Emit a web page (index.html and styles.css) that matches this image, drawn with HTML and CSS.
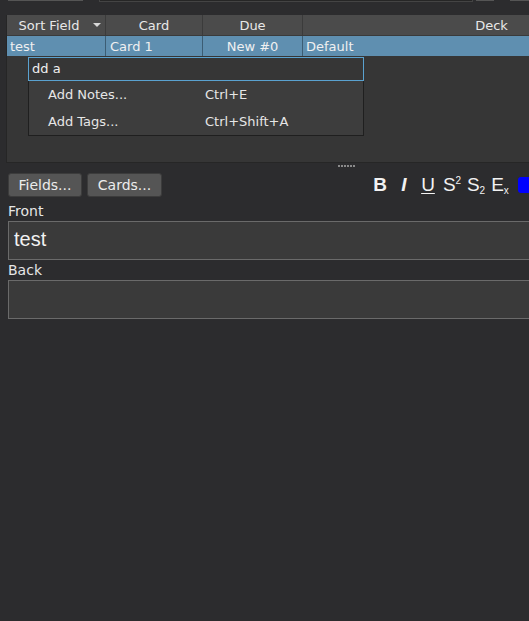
FILE: index.html
```html
<!DOCTYPE html>
<html>
<head>
<meta charset="utf-8">
<link rel="stylesheet" href="styles.css">
</head>
<body>
<div class="page">
  <div class="topstrip">
    <div class="tb a"></div>
    <div class="tb b"></div>
    <div class="tb c"></div>
    <div class="tb d"></div>
  </div>
  <div class="tablewrap">
    <div class="table">
      <div class="hdr">
        <div class="hc c1">Sort Field<span class="arrow"></span></div>
        <div class="hc c2">Card</div>
        <div class="hc c3">Due</div>
        <div class="hc c4">Deck</div>
      </div>
      <div class="row">
        <div class="rc c1 left">test</div>
        <div class="rc c2 left">Card 1</div>
        <div class="rc c3">New #0</div>
        <div class="rc c4 left">Default</div>
      </div>
    </div>
    <div class="completer">
      <div class="cinput">dd a</div>
      <div class="clist">
        <div class="citem"><span class="cname">Add Notes...</span><span class="ckey">Ctrl+E</span></div>
        <div class="citem"><span class="cname">Add Tags...</span><span class="ckey">Ctrl+Shift+A</span></div>
      </div>
    </div>
  </div>
  <div class="splitter"><span class="dots"></span></div>
  <div class="toolbar">
    <button class="btn w1">Fields...</button>
    <button class="btn w2">Cards...</button>
    <div class="fmt">
      <span class="ic bold">B</span>
      <span class="ic ital">I</span>
      <span class="ic und">U</span>
      <span class="ic sup">S<sup>2</sup></span>
      <span class="ic sub">S<sub>2</sub></span>
      <span class="ic ex">E<sub>x</sub></span>
      <span class="swatch"></span>
    </div>
  </div>
  <div class="editor">
    <div class="lbl">Front</div>
    <div class="field">test</div>
    <div class="lbl">Back</div>
    <div class="field"></div>
  </div>
</div>
</body>
</html>
```

FILE: styles.css
```css
html, body {
  margin: 0;
  padding: 0;
  background: #2c2c2e;
  overflow: hidden;
}
.page {
  width: 529px;
  height: 621px;
  overflow: hidden;
  font-family: "DejaVu Sans", sans-serif;
  font-size: 13px;
  color: #e6e6e6;
}
.topstrip {
  height: 15px;
  position: relative;
}
.tb {
  position: absolute;
  top: 0;
  height: 1px;
}
.tb.a { left: 8px; width: 75px; border-bottom: 1px solid #555555; height: 0; }
.tb.b { left: 99px; width: 372px; background: #262626; border: 1px solid #444444; border-top: none; height: 1px; }
.tb.c { left: 476px; width: 18px; border-bottom: 1px solid #555555; height: 0; }
.tb.d { left: 510px; width: 30px; border-bottom: 1px solid #555555; height: 0; }

.tablewrap {
  position: relative;
  margin-left: 6px;
  width: 700px;
  height: 147px;
  background: #363636;
  border: 1px solid #262626;
  border-top: none;
  border-right: none;
}
.table { display: flex; flex-direction: column; }
.hdr {
  display: flex;
  height: 20px;
  background: #4b4b4b;
  border-bottom: 1px solid #3a3a3a;
}
.hc {
  box-sizing: border-box;
  height: 20px;
  line-height: 21px;
  overflow: hidden;
  text-align: center;
  border-right: 1px solid #3b3b3b;
  color: #e8e8e8;
  position: relative;
}
.c1 { width: 99px; }
.c2 { width: 97px; }
.c3 { width: 100px; }
.c4 { width: 378px; }
.hc.c1 { padding-right: 14px; }
.arrow {
  position: absolute;
  right: 4px;
  top: 8px;
  width: 0; height: 0;
  border-left: 4px solid transparent;
  border-right: 4px solid transparent;
  border-top: 4px solid #d8d8d8;
}
.row {
  display: flex;
  height: 20px;
  background: #5f8fb0;
}
.rc {
  box-sizing: border-box;
  height: 20px;
  line-height: 21px;
  overflow: hidden;
  text-align: center;
  border-right: 1px solid #3c5d74;
  color: #f0f0f0;
}
.rc.left { text-align: left; padding-left: 3px; }
.rc.c2.left { padding-left: 4px; }
.rc.c4 { border-right: none; }

.completer {
  position: absolute;
  left: 21px;
  top: 42px;
  width: 336px;
}
.cinput {
  box-sizing: border-box;
  height: 24px;
  line-height: 22px;
  padding-left: 3px;
  background: #363636;
  border: 1px solid #5aa2d0;
  color: #f0f0f0;
}
.clist {
  background: #3d3d3d;
  border: 1px solid #1f1f1f;
  border-top: none;
  padding: 0;
}
.citem {
  display: flex;
  height: 27px;
  line-height: 27px;
}
.cname { width: 157px; padding-left: 19px; }

.splitter {
  height: 7px;
}
.dots {
  display: block;
  margin-left: 338px;
  margin-top: 2px;
  width: 17px;
  height: 2px;
  background: repeating-linear-gradient(90deg, #8a8a8a 0 2px, transparent 2px 3px);
}
.toolbar {
  display: flex;
  align-items: center;
  padding-left: 8px;
  gap: 5px;
  height: 26px;
}
.btn {
  flex: none;
  box-sizing: border-box;
  height: 24px;
  background: #555555;
  border: 1px solid #3c3c3c;
  border-radius: 3px;
  color: #ececec;
  font-family: "DejaVu Sans", sans-serif;
  font-size: 14px;
  padding: 0;
}
.w1 { width: 74px; }
.w2 { width: 75px; }
.fmt {
  margin-left: 201px;
  display: flex;
  align-items: center;
  font-family: "Liberation Sans", Arial, sans-serif;
  color: #f2f2f2;
  flex: none;
}
.ic {
  font-size: 19px;
  line-height: 22px;
  height: 22px;
  display: inline-block;
  width: 24px;
  text-align: center;
  white-space: nowrap;
}
.ic.bold { font-weight: bold; }
.ic.ital { font-style: italic; font-weight: bold; }
.ic.und { text-decoration: underline; text-decoration-thickness: 1px; text-underline-offset: 2px; }
.ic sup, .ic sub { font-size: 10px; line-height: 0; }
.ic sup { vertical-align: 7px; }
.ic sub { vertical-align: -3px; }
.swatch {
  display: inline-block;
  width: 18px;
  height: 16px;
  background: #0000ff;
  border-radius: 3px;
  margin-left: 6px;
}
.editor {
  padding: 4px 0 0 8px;
}
.lbl {
  height: 19px;
  line-height: 18px;
  color: #e6e6e6;
  font-size: 14px;
}
.field {
  box-sizing: border-box;
  width: 560px;
  height: 39px;
  background: #3a3a3a;
  border: 1px solid #6a6a6a;
  font-family: "Liberation Sans", Arial, sans-serif;
  font-size: 20px;
  line-height: 34px;
  padding-left: 5px;
  color: #f2f2f2;
  margin-bottom: 1px;
}
```
